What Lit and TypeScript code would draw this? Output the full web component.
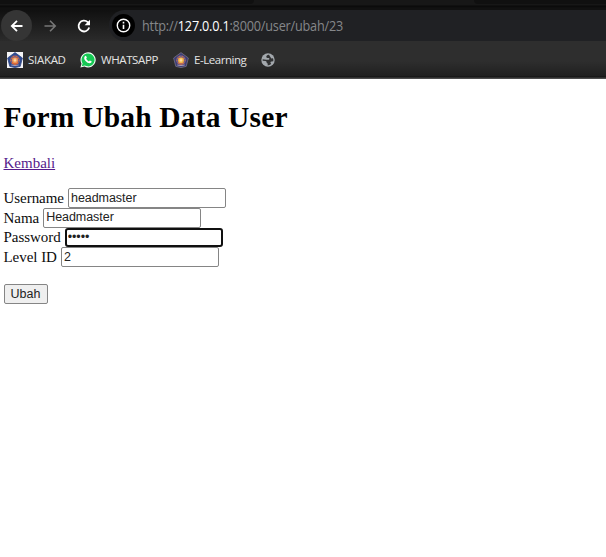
import { LitElement, html, css, svg } from "lit";
import { customElement } from "lit/decorators.js";

const crest = (tile: boolean) => html`<svg class="crest" viewBox="0 0 16 16">
  ${tile ? svg`<rect width="16" height="16" fill="#f4f4f6"/>` : ""}
  <path d="M8 .6 15.4 6 13.2 14.4 8 15.6 2.8 14.4.6 6Z" fill=${tile ? "#2d4b94" : "#3a3d78"} stroke=${tile ? "#35477d" : "#77717f"} stroke-width=".8"/>
  <circle cx="8" cy="8.3" r="4.7" fill=${tile ? "#d9693b" : "#b96a58"}/>
  <path d="M4 6.5q1.5 2 .5 4M12 6.5q-1.5 2-.5 4M8 3v3M5 4.5l2 2M11 4.5l-2 2" stroke="#4c5ba0" stroke-width="1" fill="none"/>
  <circle cx="8" cy="8.2" r="2.8" fill=${tile ? "#ee9a5a" : "#f3b845"}/>
  <path d="M8 6.5v3.4M6.6 8.2h2.8" stroke="#ffe7b4" stroke-width="1"/>
  <path d="M4.3 13q3.7 1.2 7.4 0" stroke="#b3a5b8" fill="none" stroke-width=".9"/>
</svg>`;

@customElement("app-root")
export class AppRoot extends LitElement {
  static styles = css`
    :host { display: block; height: 557px; background: #fff; overflow: hidden; color: #0c0c0c; }
    * { box-sizing: border-box; }
    svg { display: block; flex: none; }
    .tabs { height: 10px; background: linear-gradient(#171717 0 5px, #090909 6px, #111 8px); display: flex; justify-content: space-between; }
    .tab { height: 4px; background: #101010; }
    .left { width: 254px; border-radius: 0 0 7px 0; }
    .right { width: 132px; border-radius: 0 0 0 7px; }
    .toolbar { height: 31px; display: flex; align-items: center; background: linear-gradient(#101010, #2b2b2b); }
    .nav { width: 31px; height: 31px; margin-left: 1px; border-radius: 50%; background: #353535; display: grid; place-items: center; }
    .forward { margin-left: 11px; }
    .reload { margin-left: 17px; }
    .address { margin-left: 17px; flex: 1; height: 31px; border-radius: 16px 0 0 16px; background: #202124; display: flex; align-items: center; }
    .info { width: 23px; height: 23px; border-radius: 50%; background: #000; margin-left: 3px; display: grid; place-items: center; }
    .url { margin-left: 7px; font: 14px "Open Sans", sans-serif; color: #85878a; white-space: nowrap; letter-spacing: -.22px; transform: scaleX(.905); transform-origin: left; }
    .url b { color: #fff; font-weight: 400; }
    .bookmarks { height: 38px; padding: 0 7px 1px; display: flex; align-items: center; background: linear-gradient(#2e2e2e 0 20px, #202020 35px, #111 36px, #4c4c4c 37px); color: #e4e4e4; font: 11.5px "Open Sans", sans-serif; }
    .bookmark { display: flex; align-items: center; gap: 5px; white-space: nowrap; }
    .siakad { width: 73px; letter-spacing: -.3px; }
    .whatsapp { width: 93px; letter-spacing: -.4px; }
    .learning { width: 88px; letter-spacing: -.45px; }
    .crest { width: 16px; height: 16px; }
    .page { padding: 0 3.5px; font: 15px/20px "Liberation Serif", serif; }
    h1 { margin: 0; padding-top: 20px; font-size: 29.5px; line-height: 36px; letter-spacing: .17px; white-space: nowrap; color: #000; }
    .back { display: block; width: max-content; margin-top: 18px; color: #551a8b; text-decoration: underline; }
    form { padding-top: 15.2px; }
    .row { display: flex; height: 19.7px; align-items: center; gap: 4px; white-space: nowrap; letter-spacing: -.04px; }
    input { width: 158px; height: 20px; margin: 0; padding: 0 2px 1px; border: 1px solid #858585; border-radius: 2px; background: #fff; color: #222; font: 12.5px "Liberation Sans", sans-serif; letter-spacing: -.05px; outline: 0; }
    .focused { border: 2px solid #101010; border-radius: 3px; padding: 0 1px; height: 19px; }
    button { display: block; width: 44px; height: 20px; margin: 16.8px 0 0; padding: 0; border: 1px solid #858585; border-radius: 2px; background: #efefef; color: #222; font: 12.5px "Liberation Sans", sans-serif; }
  `;

  render() {
    return html`
      <div class="tabs"><div class="tab left"></div><div class="tab right"></div></div>
      <div class="toolbar">
        <div class="nav"><svg width="16" height="16" viewBox="0 0 16 16" fill="none" stroke="#fff" stroke-width="1.8"><path d="M13.5 8H3M8 2.8 2.8 8 8 13.2"/></svg></div>
        <svg class="forward" width="16" height="16" viewBox="0 0 16 16" fill="none" stroke="#777" stroke-width="1.6"><path d="M1.5 8H12M7 2.8 12.2 8 7 13.2"/></svg>
        <svg class="reload" width="16" height="16" viewBox="0 0 16 16" fill="none" stroke="#fff" stroke-width="1.8"><path d="M13.2 9.6A5.4 5.4 0 1 1 11.7 4.1L13 5.4"/><path d="M14 1.8v5.4H8.6Z" fill="#fff" stroke="none"/></svg>
        <div class="address">
          <div class="info"><svg width="15" height="15" viewBox="0 0 14 14"><circle cx="7" cy="7" r="5.8" fill="none" stroke="#fff" stroke-width="1.3"/><path d="M7 6.2v4M7 3.6v1.5" stroke="#fff" stroke-width="1.5"/></svg></div>
          <span class="url">http://<b>127.0.0.1</b>:8000/user/ubah/23</span>
        </div>
      </div>
      <div class="bookmarks">
        <div class="bookmark siakad">${crest(true)}<span>SIAKAD</span></div>
        <div class="bookmark whatsapp"><svg width="16" height="16" viewBox="0 0 16 16"><path d="M.4 15.6 1.5 11.7A7.6 7.6 0 1 1 4.5 14.6Z" fill="#f4fff7"/><path d="M1.7 14.3 2.6 11.4A6.5 6.5 0 1 1 4.8 13.5Z" fill="#16c854"/><path d="M5.2 4.1q.7-.5 1 .1l.7 1.6-.8 1q1 1.9 2.8 2.6l.9-1 1.8.9c.2 1.1-.8 2-2 2C7 11.2 4.1 8 4.2 6q.1-1.2 1-1.9Z" fill="#fff"/></svg><span>WHATSAPP</span></div>
        <div class="bookmark learning">${crest(false)}<span>E-Learning</span></div>
        <svg width="14" height="14" viewBox="0 0 14 14"><circle cx="7" cy="7" r="6.7" fill="#a3a8ad"/><path d="M8 1.8Q6 1.5 5.3 3.3 5 4.7 6.4 5h1.3q.7 0 .7.8T7.6 6.7H5.2L1.7 6.2Q1.5 7 1.7 7.8L4.5 8q1.2.2 1.2 1.4v.7q1 .1 1 1v1.4q1.8 0 3.5-1.4L9.4 9.5q.2-1 1.2-1l1.7-.2q.3-1.7-.3-3L10.4 5.5 9.5 4.2Z" fill="#303132"/></svg>
      </div>
      <main class="page">
        <h1>Form Ubah Data User</h1>
        <a class="back">Kembali</a>
        <form @submit=${(e: Event) => e.preventDefault()}>
          <label class="row"><span>Username</span><input .value=${"headmaster"}></label>
          <label class="row"><span>Nama</span><input .value=${"Headmaster"}></label>
          <label class="row"><span>Password</span><input class="focused" type="password" .value=${"12345"}></label>
          <label class="row"><span>Level ID</span><input .value=${"2"}></label>
          <button>Ubah</button>
        </form>
      </main>`;
  }
}
